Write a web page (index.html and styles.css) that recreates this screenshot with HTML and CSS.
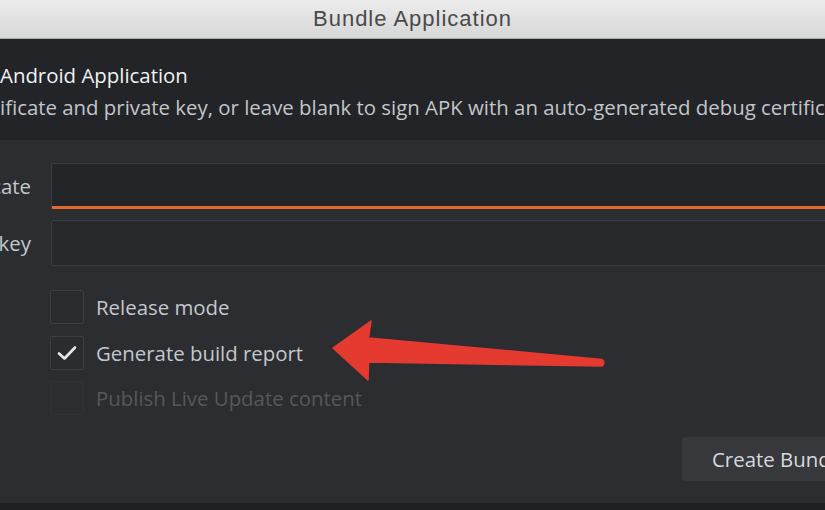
FILE: index.html
```html
<!DOCTYPE html>
<html lang="en">
<head>
<meta charset="utf-8">
<title>Bundle Application</title>
<link rel="stylesheet" href="styles.css">
</head>
<body>
<div class="window">
  <div class="titlebar">Bundle Application</div>
  <div class="header">
    <div class="heading"><span class="clip"><span>Bundle&nbsp;</span></span>Android Application</div>
    <div class="desc"><span class="clip"><span>Sign with a cert</span></span>ificate and private key, or leave blank to sign APK with an auto-generated debug certificate.</div>
  </div>
  <div class="body">
    <div class="field">
      <div class="label"><span>Certificate</span></div>
      <div class="input focused"></div>
    </div>
    <div class="field">
      <div class="label"><span>Private key</span></div>
      <div class="input"></div>
    </div>
    <div class="checks">
      <div class="check"><span class="box"></span><span class="ctext">Release mode</span></div>
      <div class="check"><span class="box"><svg width="22" height="18" viewBox="0 0 22 18"><path d="M3 9.5 L8.5 14.5 L19 3.5" fill="none" stroke="#e6e8ea" stroke-width="2.6" stroke-linecap="round" stroke-linejoin="round"/></svg></span><span class="ctext">Generate build report</span></div>
      <div class="check disabled"><span class="box"></span><span class="ctext">Publish Live Update content</span></div>
    </div>
    <div class="actions">
      <button class="btn">Create Bundle</button>
    </div>
  </div>
  <div class="footer"></div>
  <svg class="arrow" width="825" height="510" viewBox="0 0 825 510">
    <path d="M333 348 L371 321 L368.5 338 L602 359.5 Q606 362.5 602 366 L368.5 362 L368 380 Z" fill="#e53a30" stroke="#e53a30" stroke-width="1.5" stroke-linejoin="round"/>
  </svg>
</div>
</body>
</html>
```

FILE: styles.css
```css
html, body {
  margin: 0;
  padding: 0;
  overflow: hidden;
  background: #2b2d31;
}
.window {
  position: relative;
  width: 825px;
  height: 510px;
  overflow: hidden;
  display: flex;
  flex-direction: column;
  font-family: "Open Sans", "Lato", sans-serif;
}
.titlebar {
  height: 38px;
  flex: none;
  display: flex;
  align-items: center;
  justify-content: center;
  background: linear-gradient(#ececec, #d7d7d7);
  border-bottom: 1px solid #a9a9a9;
  font-family: "Liberation Sans", Arial, sans-serif;
  font-size: 22px;
  letter-spacing: 1px;
  color: #4a4a4a;
  box-sizing: content-box;
}
.header {
  height: 101px;
  flex: none;
  background: #222428;
  display: flex;
  flex-direction: column;
  padding-top: 22px;
  box-sizing: border-box;
  white-space: nowrap;
}
.clip {
  display: inline-flex;
  width: 0;
  justify-content: flex-end;
}
.clip > span { white-space: pre; }
.heading {
  display: flex;
  font-size: 20.4px;
  color: #f1f2f3;
  line-height: 28px;
}
.desc {
  display: flex;
  font-size: 20.4px;
  color: #c2c6ca;
  line-height: 28px;
  margin-top: 4px;
}
.body {
  flex: 1;
  display: flex;
  flex-direction: column;
  padding-top: 23px;
  background: #2b2d31;
}
.field {
  display: flex;
  align-items: center;
  gap: 20px;
  height: 46px;
  margin-bottom: 11px;
}
.label {
  width: 31px;
  flex: none;
  display: flex;
  justify-content: flex-end;
  white-space: nowrap;
  font-size: 20.4px;
  color: #c4c8cc;
}
.input {
  flex: none;
  width: 900px;
  height: 46px;
  box-sizing: border-box;
  background: #27292c;
  border: 1px solid #3b3d41;
  border-radius: 2px;
}
.input.focused {
  background: #232528;
  border-color: #393b3f;
  border-bottom: 3px solid #e06a2c;
}
.checks {
  display: flex;
  flex-direction: column;
  gap: 11.5px;
  padding-left: 50px;
  margin-top: 13px;
}
.check {
  display: flex;
  align-items: center;
  gap: 12px;
  height: 34px;
  font-size: 20.4px;
  color: #c4c8cc;
}
.box {
  width: 34px;
  height: 34px;
  box-sizing: border-box;
  border: 1px solid #3c3e42;
  background: #2a2c30;
  border-radius: 2px;
  display: flex;
  align-items: center;
  justify-content: center;
}
.check.disabled { color: #55585d; }
.check.disabled .box { border-color: #313337; background: #2c2e32; }
.actions {
  display: flex;
  padding-left: 682px;
  margin-top: 22px;
}
.btn {
  flex: none;
  width: 200px;
  height: 44px;
  border: none;
  border-radius: 4px;
  background: #36383c;
  color: #d6d9dc;
  font-family: "Open Sans", "Lato", sans-serif;
  font-size: 20.4px;
  text-align: left;
  padding: 0 0 0 30px;
}
.footer {
  height: 7px;
  flex: none;
  background: #1e2023;
}
.arrow {
  position: absolute;
  left: 0;
  top: 0;
  pointer-events: none;
}
```
